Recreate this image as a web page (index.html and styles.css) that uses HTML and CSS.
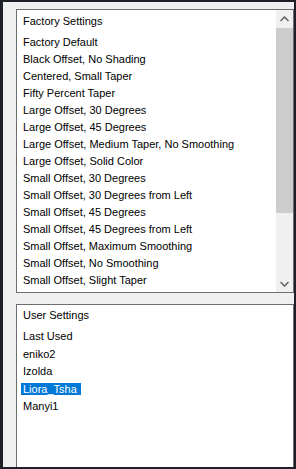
FILE: index.html
```html
<!DOCTYPE html>
<html lang="en">

<head>
  <meta charset="UTF-8">
  <meta name="viewport" content="width=device-width, initial-scale=1.0">
  <title>Settings</title>
  <link rel="stylesheet" href="styles.css">
</head>

<body>
  <div class="dlg">
    <!-- Factory presets -->
    <div class="lst lst-factory">
      <div class="lst-body">
        <div class="lst-head">Factory Settings</div>
        <ul class="lst-items">
          <li>Factory Default</li>
          <li>Black Offset, No Shading</li>
          <li>Centered, Small Taper</li>
          <li>Fifty Percent Taper</li>
          <li>Large Offset, 30 Degrees</li>
          <li>Large Offset, 45 Degrees</li>
          <li>Large Offset, Medium Taper, No Smoothing</li>
          <li>Large Offset, Solid Color</li>
          <li>Small Offset, 30 Degrees</li>
          <li>Small Offset, 30 Degrees from Left</li>
          <li>Small Offset, 45 Degrees</li>
          <li>Small Offset, 45 Degrees from Left</li>
          <li>Small Offset, Maximum Smoothing</li>
          <li>Small Offset, No Smoothing</li>
          <li>Small Offset, Slight Taper</li>
        </ul>
      </div>
      <div class="sbar">
        <div class="sbar-btn">
          <svg width="9" height="6" viewBox="0 0 9 6"><polyline points="0.5,5 4.5,1 8.5,5" fill="none" stroke="#606060" stroke-width="1.5"/></svg>
        </div>
        <div class="sbar-thumb"></div>
        <div class="sbar-track"></div>
        <div class="sbar-btn">
          <svg width="9" height="6" viewBox="0 0 9 6"><polyline points="0.5,1 4.5,5 8.5,1" fill="none" stroke="#606060" stroke-width="1.5"/></svg>
        </div>
      </div>
    </div>

    <!-- Saved by the user -->
    <div class="lst lst-user">
      <div class="lst-body">
        <div class="lst-head">User Settings</div>
        <ul class="lst-items">
          <li>Last Used</li>
          <li>eniko2</li>
          <li>Izolda</li>
          <li class="is-sel"><span>Liora_Tsha</span></li>
          <li>Manyi1</li>
        </ul>
      </div>
    </div>
  </div>
</body>

</html>
```

FILE: styles.css
```css
body {
  margin: 0;
  padding: 0;
  font-family: 'Liberation Sans', Arial, sans-serif;
  font-size: 11px;
  color: #000;
}

/* Dialog frame */
.dlg {
  width: 296px;
  height: 469px;
  box-sizing: border-box;
  border-style: solid;
  border-color: #1d2127;
  border-width: 2px 2px 2px 3px;
  padding: 7px 0 0 13px;
  background-color: #f0f0f0;
  display: flex;
  flex-direction: column;
  gap: 11px;
}

/* List boxes */
.lst {
  display: flex;
  background-color: #fff;
  border: 1px solid #6d6d6d;
  box-sizing: border-box;
}

.lst-factory {
  height: 284px;
  flex: none;
}

.lst-user {
  flex: 1;
  border-bottom: none;
}

.lst-body {
  flex: 1;
  padding: 3px 0 0 6px;
  overflow: hidden;
  white-space: nowrap;
}

.lst-user .lst-body {
  padding-top: 2px;
}

.lst-head {
  line-height: 17px;
  margin-bottom: 4px;
}

.lst-items {
  list-style: none;
  margin: 0;
  padding: 0;
  line-height: 17px;
}

.lst-user .lst-items {
  line-height: 17.5px;
}

.is-sel span {
  background-color: #0078d7;
  color: #fff;
  padding: 0 4px 0 2px;
  margin-left: -2px;
}

/* Scrollbar */
.sbar {
  width: 17px;
  display: flex;
  flex-direction: column;
  background-color: #f0f0f0;
}

.sbar-btn {
  height: 17px;
  display: flex;
  align-items: center;
  justify-content: center;
}

.sbar-thumb {
  height: 185px;
  margin-top: 1px;
  background-color: #cdcdcd;
}

.sbar-track {
  flex: 1;
}
```
